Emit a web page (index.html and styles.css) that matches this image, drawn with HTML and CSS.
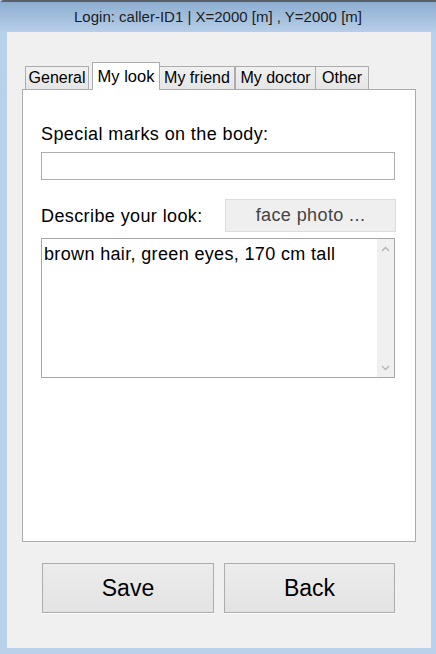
FILE: index.html
```html
<!DOCTYPE html>
<html>
<head>
<meta charset="utf-8">
<link rel="stylesheet" href="styles.css">
</head>
<body>
<div class="window">
  <div class="titlebar">Login: caller-ID1 | X=2000 [m] , Y=2000 [m]</div>
  <div class="client">
    <div class="tabs">
      <div class="tab t-general">General</div>
      <div class="tab active t-look">My look</div>
      <div class="tab t-friend">My friend</div>
      <div class="tab t-doctor">My doctor</div>
      <div class="tab t-other">Other</div>
    </div>
    <div class="panel">
      <div class="label">Special marks on the body:</div>
      <input class="field" type="text" value="">
      <div class="row">
        <span class="label">Describe your look:</span>
        <button class="photo">face photo ...</button>
      </div>
      <div class="memo">
        <div class="memo-text">brown hair, green eyes, 170 cm tall</div>
        <div class="scroll">
          <svg class="arrow" width="9" height="6" viewBox="0 0 9 6"><polyline points="1,5 4.5,1.5 8,5" fill="none" stroke="#b4b4b4" stroke-width="1.3"/></svg>
          <svg class="arrow" width="9" height="6" viewBox="0 0 9 6"><polyline points="1,1 4.5,4.5 8,1" fill="none" stroke="#b4b4b4" stroke-width="1.3"/></svg>
        </div>
      </div>
    </div>
    <div class="buttons">
      <button class="btn btn-save">Save</button>
      <button class="btn btn-back">Back</button>
    </div>
  </div>
</div>
</body>
</html>
```

FILE: styles.css
```css
* { box-sizing: border-box; }
html, body { margin: 0; padding: 0; }
body {
  width: 436px;
  height: 654px;
  overflow: hidden;
  background: #b9d1ea;
  font-family: "Liberation Sans", Arial, sans-serif;
}
.window {
  width: 436px;
  height: 654px;
  display: flex;
  flex-direction: column;
  background: #b9d1ea;
  border-top: 2px solid #5a5f66;
  border-top-left-radius: 4px;
}
.titlebar {
  height: 30px;
  flex: none;
  background: linear-gradient(#8eaed0, #b6cee9);
  color: #1c1c1c;
  font-size: 15px;
  text-align: center;
  line-height: 24px;
  padding-top: 3px;
}
.client {
  flex: none;
  height: 616px;
  margin: 0 5px 0 7px;
  background: #f0f0f0;
  display: flex;
  flex-direction: column;
}
.tabs {
  display: flex;
  align-items: flex-end;
  margin: 30px 15px 0 15px;
  padding-left: 3px;
  height: 27px;
}
.tab {
  height: 23px;
  border: 1px solid #acacac;
  border-bottom: none;
  background: linear-gradient(#f0f0f0, #e5e5e5);
  font-size: 16px;
  line-height: 22px;
  text-align: center;
  color: #000;
  white-space: nowrap;
}
.t-general { width: 64px; margin-right: 3px; }
.t-look { width: 68px; }
.t-friend { width: 75px; border-left: none; }
.t-doctor { width: 81px; }
.t-other { width: 53px; border-left: none; }
.tab.active {
  position: relative;
  z-index: 1;
  height: 28px;
  margin-bottom: -1px;
  padding-top: 2px;
  background: #fff;
  font-size: 16.5px;
}
.panel {
  margin: 0 15px;
  height: 453px;
  background: #fff;
  border: 1px solid #acacac;
  padding: 34px 20px 0 18px;
  display: flex;
  flex-direction: column;
}
.label {
  font-size: 18px;
  letter-spacing: 0.4px;
  line-height: 20px;
  color: #000;
}
.field {
  display: block;
  margin: 8px 0 0 0;
  width: 354px;
  height: 28px;
  border: 1px solid #abadb3;
  background: #fff;
  padding: 0 3px;
  font: inherit;
  outline: none;
}
.row {
  margin-top: 19px;
  height: 33px;
  display: flex;
  align-items: center;
  justify-content: space-between;
}
.photo {
  width: 171px;
  height: 33px;
  border: 1px solid #dcdcdc;
  background: #efefef;
  color: #444;
  font-family: "Liberation Sans", Arial, sans-serif;
  font-size: 18px;
  letter-spacing: 0.4px;
  padding: 0;
  margin-right: -1px;
}
.memo {
  margin-top: 6px;
  width: 354px;
  height: 140px;
  border: 1px solid #a6a6a6;
  display: flex;
}
.memo-text {
  flex: 1;
  padding: 5px 0 0 2px;
  font-size: 18px;
  letter-spacing: 0.35px;
  line-height: 20px;
  color: #000;
}
.scroll {
  width: 17px;
  background: #f0f0f0;
  display: flex;
  flex-direction: column;
  justify-content: space-between;
  align-items: center;
  padding: 7px 0 6px 0;
}
.arrow { display: block; }
.buttons {
  display: flex;
  gap: 10px;
  margin: 21px 0 0 35px;
}
.btn {
  height: 50px;
  border: 1px solid #adadad;
  background: linear-gradient(#ececec, #e3e3e3);
  box-shadow: 0 1px 0 #fff;
  font-family: "Liberation Sans", Arial, sans-serif;
  font-size: 23px;
  color: #000;
  padding: 0;
}
.btn-save { width: 172px; }
.btn-back { width: 171px; }
```
